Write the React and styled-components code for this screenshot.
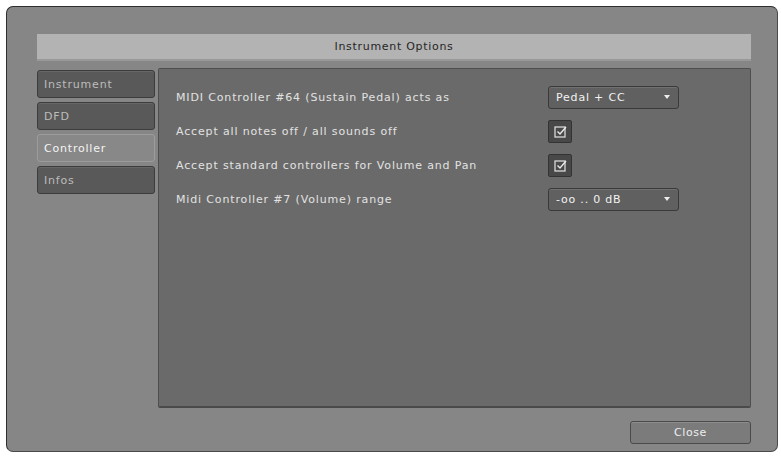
import styled, { createGlobalStyle } from "styled-components";

const GlobalStyle = createGlobalStyle`
  html, body {
    margin: 0;
    padding: 0;
    background: #ffffff;
  }
  body {
    font-family: "DejaVu Sans", "Liberation Sans", sans-serif;
  }
`;

const Page = styled.div`
  width: 781px;
  height: 456px;
  padding: 6px 3px 4px 6px;
  box-sizing: border-box;
`;

const Window = styled.div`
  display: flex;
  flex-direction: column;
  width: 100%;
  height: 100%;
  box-sizing: border-box;
  background-color: #868686;
  border: 1px solid #2e2e2e;
  border-right-color: #4a4a4a;
  border-bottom-color: #4a4a4a;
  border-radius: 7px;
  padding: 27px 26px 0 30px;
`;

const TitleBar = styled.div`
  height: 27px;
  display: flex;
  align-items: center;
  justify-content: center;
  background-color: #b3b3b3;
  border-bottom: 2px solid #999999;
  box-sizing: border-box;
  font-size: 11px;
  letter-spacing: 0.7px;
  color: #262626;
`;

const Body = styled.div`
  display: flex;
  gap: 3px;
  margin-top: 7px;
  height: 340px;
`;

const Tabs = styled.div`
  display: flex;
  flex-direction: column;
  gap: 4px;
  width: 118px;
  padding-top: 2px;
`;

const Tab = styled.div`
  height: 28px;
  box-sizing: border-box;
  display: flex;
  align-items: center;
  padding-left: 6px;
  font-size: 11px;
  letter-spacing: 0.8px;
  border-radius: 3px;
  color: ${(p) => (p.$active ? "#f4f4f4" : "#bcbcbc")};
  background-color: ${(p) => (p.$active ? "#888888" : "#595959")};
  border: 1px solid ${(p) => (p.$active ? "#9c9c9c" : "#3c3c3c")};
  box-shadow: ${(p) =>
    p.$active ? "none" : "inset 0 1px 0 rgba(255,255,255,0.08)"};
`;

const Panel = styled.div`
  flex: 1;
  background-color: #6a6a6a;
  border: 1px solid #4e4e4e;
  border-bottom: 2px solid #4a4a4a;
  border-radius: 2px;
  box-sizing: border-box;
  padding: 11px 0 0 17px;
`;

const OptionGrid = styled.div`
  display: grid;
  grid-template-columns: 372px 140px;
  grid-auto-rows: 34px;
  align-items: center;
`;

const Label = styled.div`
  font-size: 11px;
  letter-spacing: 0.85px;
  color: #e2e2e2;
  white-space: nowrap;
`;

const Dropdown = styled.div`
  width: 131px;
  height: 23px;
  box-sizing: border-box;
  display: flex;
  align-items: center;
  justify-content: space-between;
  padding: 0 8px 0 7px;
  background-color: #606060;
  border: 1px solid #3a3a3a;
  border-radius: 3px;
  box-shadow: inset 0 1px 0 rgba(255, 255, 255, 0.1);
  font-size: 11px;
  letter-spacing: 0.8px;
  color: #f2f2f2;
`;

const Arrow = styled.span`
  width: 0;
  height: 0;
  border-left: 3px solid transparent;
  border-right: 3px solid transparent;
  border-top: 4px solid #ededed;
`;

const CheckBox = styled.div`
  width: 24px;
  height: 23px;
  box-sizing: border-box;
  display: flex;
  align-items: center;
  justify-content: center;
  background-color: #484848;
  border: 1px solid #333333;
  border-radius: 2px;
`;

const Footer = styled.div`
  display: flex;
  justify-content: flex-end;
  padding-top: 13px;
`;

const CloseButton = styled.div`
  width: 121px;
  height: 23px;
  box-sizing: border-box;
  display: flex;
  align-items: center;
  justify-content: center;
  background-color: #7b7b7b;
  border: 1px solid #4a4a4a;
  border-radius: 3px;
  box-shadow: inset 0 1px 0 rgba(255, 255, 255, 0.15);
  font-size: 11px;
  letter-spacing: 0.6px;
  color: #eeeeee;
`;

const CheckIcon = () => (
  <svg width="13" height="13" viewBox="0 0 13 13">
    <rect x="1" y="2" width="10" height="10" fill="none" stroke="#d8d8d8" strokeWidth="1.3" />
    <path d="M3.5 6.5 L6 9 L12 2" fill="none" stroke="#e8e8e8" strokeWidth="1.4" />
  </svg>
);

const tabs = ["Instrument", "DFD", "Controller", "Infos"];

const App = () => {
  return (
    <Page>
      <GlobalStyle />
      <Window>
        <TitleBar>Instrument Options</TitleBar>
        <Body>
          <Tabs>
            {tabs.map((t) => (
              <Tab key={t} $active={t === "Controller"}>
                {t}
              </Tab>
            ))}
          </Tabs>
          <Panel>
            <OptionGrid>
              <Label>MIDI Controller #64 (Sustain Pedal) acts as</Label>
              <Dropdown>
                Pedal + CC
                <Arrow />
              </Dropdown>
              <Label>Accept all notes off / all sounds off</Label>
              <CheckBox>
                <CheckIcon />
              </CheckBox>
              <Label>Accept standard controllers for Volume and Pan</Label>
              <CheckBox>
                <CheckIcon />
              </CheckBox>
              <Label>Midi Controller #7 (Volume) range</Label>
              <Dropdown>
                -oo .. 0 dB
                <Arrow />
              </Dropdown>
            </OptionGrid>
          </Panel>
        </Body>
        <Footer>
          <CloseButton>Close</CloseButton>
        </Footer>
      </Window>
    </Page>
  );
};

export default App;
